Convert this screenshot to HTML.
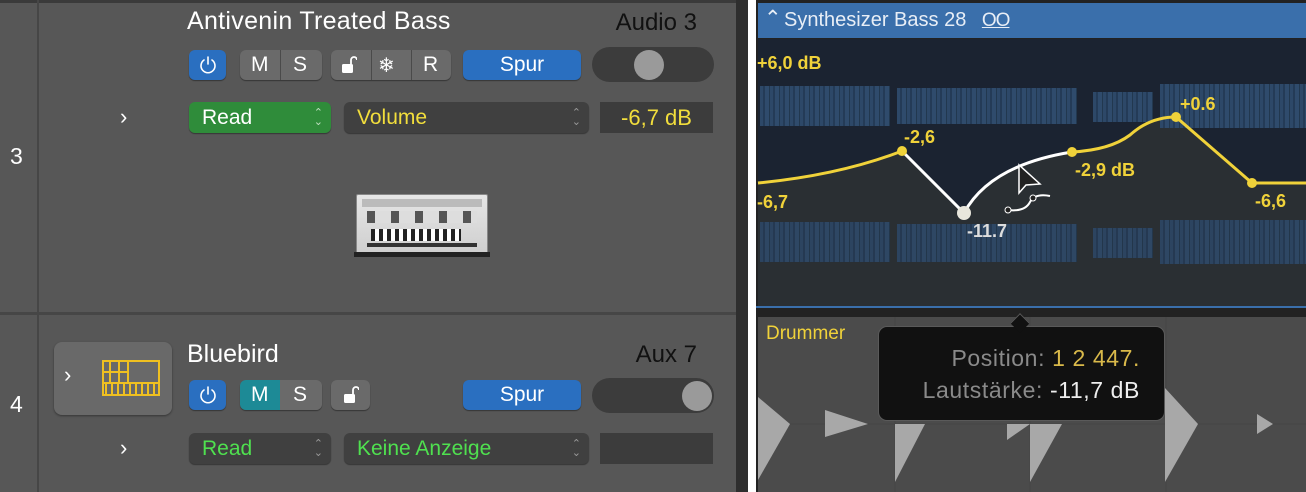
<!DOCTYPE html>
<html><head><meta charset="utf-8"><style>
*{box-sizing:border-box;margin:0;padding:0}
body{width:1306px;height:492px;overflow:hidden;background:#fff;font-family:"Liberation Sans",sans-serif;position:relative}
.a{position:absolute}
.btn{position:absolute;height:30px;border-radius:6px;background:#6a6a6a;color:#fff;font-size:21px;display:flex;align-items:center;justify-content:center;box-shadow:0 1px 1px rgba(0,0,0,.4)}
.blue{background:#2a6fc0}
.sel{position:absolute;height:31px;border-radius:6px;background:#404040;font-size:21px;padding-left:13px;line-height:31px;box-shadow:0 1px 1px rgba(0,0,0,.4)}
.sel .ud{position:absolute;right:8px;top:0;font-size:11px;line-height:9px;color:#999;padding-top:7px}
.sep{position:absolute;top:0;width:1px;height:30px;background:#4a4a4a}
.wf{position:absolute;background:repeating-linear-gradient(90deg,#2d4868 0 3px,#243b57 3px 5px,#2f4b6c 5px 9px,#22384f 9px 10px)}
</style></head><body>
<div class="a" style="left:0;top:0;width:748px;height:492px;background:#575757"></div>
<div class="a" style="left:0;top:0;width:748px;height:3px;background:#3a3a3a"></div>
<div class="a" style="left:37px;top:0;width:2px;height:492px;background:#464646"></div>
<div class="a" style="left:0;top:312px;width:737px;height:3px;background:#464646"></div>
<div class="a" style="left:736px;top:0;width:12px;height:492px;background:#2e2e2e"></div>
<div class="a" style="left:10px;top:143px;color:#fff;font-size:23px">3</div>
<div class="a" style="left:10px;top:391px;color:#fff;font-size:23px">4</div>

<!-- track 3 -->
<div class="a" style="left:187px;top:7px;color:#fff;font-size:25px;letter-spacing:0.3px">Antivenin Treated Bass</div>
<div class="a" style="left:596px;top:9px;width:101px;text-align:right;color:#111;font-size:24px">Audio 3</div>
<div class="btn blue" style="left:189px;top:50px;width:37px"><svg width="20" height="20" viewBox="0 0 20 20"><path d="M6 5A7 7 0 1 0 14 5M10 2V9" fill="none" stroke="#fff" stroke-width="1.6" stroke-linecap="round"/></svg></div>
<div class="btn" style="left:240px;top:50px;width:82px"><span style="position:absolute;left:11px">M</span><span style="position:absolute;left:53px">S</span><div class="sep" style="left:40px"></div></div>
<div class="btn" style="left:331px;top:50px;width:120px"><svg class="a" style="left:10px;top:6px" width="16" height="18" viewBox="0 0 16 18"><path d="M10 8V4a3 3 0 0 1 6 0" fill="none" stroke="#fff" stroke-width="1.8"/><rect x="1" y="8" width="11" height="9" rx="1.5" fill="#fff"/></svg><div class="sep" style="left:40px"></div><span style="position:absolute;left:47px;font-size:20px">❄</span><div class="sep" style="left:80px"></div><span style="position:absolute;left:92px">R</span></div>
<div class="btn blue" style="left:463px;top:50px;width:118px;font-size:21px">Spur</div>
<div class="a" style="left:592px;top:47px;width:122px;height:35px;border-radius:18px;background:#3c3c3c"></div>
<div class="a" style="left:634px;top:50px;width:30px;height:30px;border-radius:15px;background:#9a9a9a"></div>
<div class="a" style="left:120px;top:104px;color:#fff;font-size:22px">›</div>
<div class="sel" style="left:189px;top:102px;width:142px;background:#2f8c3a;color:#fff">Read<div class="ud" style="color:#bfe0bf">⌃<br>⌄</div></div>
<div class="sel" style="left:344px;top:102px;width:245px;color:#f2de3c">Volume<div class="ud">⌃<br>⌄</div></div>
<div class="a" style="left:600px;top:102px;width:113px;height:31px;background:#3c3c3c;color:#f2de3c;font-size:22px;line-height:31px;text-align:center">-6,7 dB</div>
<!-- synth -->
<div class="a" style="left:356px;top:194px;width:132px;height:60px;background:linear-gradient(#e6e6e6,#cfcfcf);border:1px solid #888;border-radius:2px">
 <div class="a" style="left:5px;top:4px;width:120px;height:8px;background:#bbb"></div>
 <div class="a" style="left:10px;top:16px;width:110px;height:12px;background:repeating-linear-gradient(90deg,#555 0 8px,#ddd 8px 24px)"></div>
 <div class="a" style="left:14px;top:34px;width:90px;height:12px;background:repeating-linear-gradient(90deg,#222 0 4px,#fff 4px 8px)"></div>
 <div class="a" style="left:10px;top:48px;width:110px;height:4px;background:#333"></div>
</div>
<div class="a" style="left:354px;top:252px;width:136px;height:5px;background:#222"></div>

<!-- track 4 -->
<div class="a" style="left:54px;top:342px;width:118px;height:73px;border-radius:8px;background:#696969;box-shadow:0 1px 2px rgba(0,0,0,.4)"></div>
<div class="a" style="left:64px;top:362px;color:#fff;font-size:22px">›</div>
<svg class="a" style="left:102px;top:360px" width="58" height="36" viewBox="0 0 58 36"><g fill="none" stroke="#f0c020" stroke-width="2"><rect x="1" y="1" width="56" height="34"/><path d="M1 12H26M1 23H57M8 1V23M17 1V23M26 1V23M4 23V35M10 23V35M16 23V35M22 23V35M28 23V35M34 23V35M40 23V35M46 23V35M52 23V35"/></g></svg>
<div class="a" style="left:187px;top:340px;color:#fff;font-size:25px">Bluebird</div>
<div class="a" style="left:596px;top:341px;width:101px;text-align:right;color:#111;font-size:24px">Aux 7</div>
<div class="btn blue" style="left:189px;top:380px;width:37px"><svg width="20" height="20" viewBox="0 0 20 20"><path d="M6 5A7 7 0 1 0 14 5M10 2V9" fill="none" stroke="#fff" stroke-width="1.6" stroke-linecap="round"/></svg></div>
<div class="btn" style="left:240px;top:380px;width:82px;background:linear-gradient(90deg,#1d8a96 0 40px,#6a6a6a 40px)"><span style="position:absolute;left:11px">M</span><span style="position:absolute;left:53px">S</span></div>
<div class="btn" style="left:331px;top:380px;width:39px"><svg width="16" height="18" viewBox="0 0 16 18"><path d="M10 8V4a3 3 0 0 1 6 0" fill="none" stroke="#fff" stroke-width="1.8"/><rect x="1" y="8" width="11" height="9" rx="1.5" fill="#fff"/></svg></div>
<div class="btn blue" style="left:463px;top:380px;width:118px;font-size:21px">Spur</div>
<div class="a" style="left:592px;top:378px;width:122px;height:35px;border-radius:18px;background:#3c3c3c"></div>
<div class="a" style="left:682px;top:381px;width:30px;height:30px;border-radius:15px;background:#9a9a9a"></div>
<div class="a" style="left:120px;top:435px;color:#fff;font-size:22px">›</div>
<div class="sel" style="left:189px;top:433px;width:142px;color:#4fe04f">Read<div class="ud">⌃<br>⌄</div></div>
<div class="sel" style="left:344px;top:433px;width:245px;color:#4fe04f">Keine Anzeige<div class="ud">⌃<br>⌄</div></div>
<div class="a" style="left:600px;top:433px;width:113px;height:31px;background:#3c3c3c"></div>

<!-- right panel -->
<div class="a" style="left:756px;top:0;width:550px;height:492px;background:#222"></div>
<div class="a" style="left:758px;top:3px;width:548px;height:35px;background:#3a6fab"></div>
<div class="a" style="left:764px;top:6px;color:#e8eef6;font-size:21px">⌃</div>
<div class="a" style="left:784px;top:9px;color:#e8eef6;font-size:20px">Synthesizer Bass 28 <span style="text-decoration:underline;font-size:19px;margin-left:10px;letter-spacing:-1px">OO</span></div>
<div class="a" style="left:758px;top:39px;width:548px;height:269px;background:#1b2331"></div>
<svg class="a" style="left:756px;top:39px" width="550" height="270" viewBox="756 39 550 270">
 <path d="M758 183 Q840 175 902 151 L964 213 Q990 165 1072 152 Q1110 150 1130 135 Q1150 117 1176 117 L1252 183 L1306 183 L1306 308 L758 308Z" fill="#2a2f33"/>
</svg>
<div class="wf" style="left:760px;top:86px;width:130px;height:40px"></div>
<div class="wf" style="left:897px;top:88px;width:180px;height:36px"></div>
<div class="wf" style="left:1093px;top:92px;width:60px;height:30px"></div>
<div class="wf" style="left:1160px;top:84px;width:146px;height:44px"></div>
<div class="wf" style="left:760px;top:222px;width:130px;height:40px;opacity:.85"></div>
<div class="wf" style="left:897px;top:224px;width:180px;height:38px;opacity:.85"></div>
<div class="wf" style="left:1093px;top:228px;width:60px;height:30px;opacity:.85"></div>
<div class="wf" style="left:1160px;top:220px;width:146px;height:44px;opacity:.85"></div>
<svg class="a" style="left:756px;top:39px" width="550" height="270" viewBox="756 39 550 270">
 <path d="M758 183 Q840 175 902 151" fill="none" stroke="#f0d23a" stroke-width="3"/>
 <path d="M902 151 L964 213 Q990 165 1072 152" fill="none" stroke="#fff" stroke-width="3"/>
 <path d="M1072 152 Q1110 150 1130 135 Q1150 117 1176 117 L1252 183 L1306 183" fill="none" stroke="#f0d23a" stroke-width="3"/>
 <g fill="#f0d23a"><circle cx="902" cy="151" r="5"/><circle cx="1072" cy="152" r="5"/><circle cx="1176" cy="117" r="5"/><circle cx="1252" cy="183" r="5"/></g>
 <circle cx="964" cy="213" r="7" fill="#e8e6dc"/>
 <path d="M1019 165 L1019 193 L1026 185 L1040 184Z" fill="#222" stroke="#fff" stroke-width="1.5"/>
 <path d="M1008 210 Q1025 212 1030 202 Q1035 193 1050 196" fill="none" stroke="#fff" stroke-width="2"/>
 <circle cx="1008" cy="210" r="3" fill="#222" stroke="#fff"/><circle cx="1033" cy="198" r="3" fill="#222" stroke="#fff"/>
 <g font-family="Liberation Sans" font-weight="bold" font-size="18" fill="#f0d23a">
  <text x="757" y="69">+6,0 dB</text><text x="904" y="143">-2,6</text><text x="1075" y="176">-2,9 dB</text><text x="1180" y="110">+0.6</text><text x="757" y="208">-6,7</text><text x="1255" y="207">-6,6</text>
  <text x="967" y="237" fill="#ddd">-11.7</text>
 </g>
 <line x1="756" y1="307" x2="1306" y2="307" stroke="#3a6fab" stroke-width="2"/>
</svg>
<div class="a" style="left:758px;top:317px;width:548px;height:175px;background:#4b4b4b"></div>
<svg class="a" style="left:756px;top:317px" width="550" height="175" viewBox="756 317 550 175">
 <g stroke="#444" stroke-width="1"><path d="M895 317V492M1030 317V492M1166 317V492M758 424H1306"/></g>
 <g fill="#a8a8a8">
  <path d="M758 397L790 424L758 480Z"/><path d="M825 410L868 424L825 437Z"/><path d="M895 424L925 424L895 482Z"/>
  <path d="M1007 424L1030 424L1007 440Z"/><path d="M1030 424L1062 424L1030 482Z"/>
  <path d="M1165 388L1198 424L1165 482Z"/><path d="M1257 414L1273 424L1257 434Z"/>
 </g>
</svg>
<div class="a" style="left:766px;top:323px;color:#f0d23a;font-size:19px">Drummer</div>
<div class="a" style="left:878px;top:326px;width:287px;height:95px;background:#111;border:1.5px solid #5a5a5a;border-radius:9px"></div>
<div class="a" style="left:1013px;top:316px;width:14px;height:14px;background:#111;border-left:1.5px solid #5a5a5a;border-top:1.5px solid #5a5a5a;transform:rotate(45deg)"></div>
<div class="a" style="left:880px;top:342px;width:260px;text-align:right;font-size:23px;letter-spacing:0.6px;color:#8a8a8a;line-height:32px">Position: <span style="color:#d9b94a">1 2 447.</span><br>Lautstärke: <span style="color:#eee">-11,7 dB</span></div>
</body></html>
